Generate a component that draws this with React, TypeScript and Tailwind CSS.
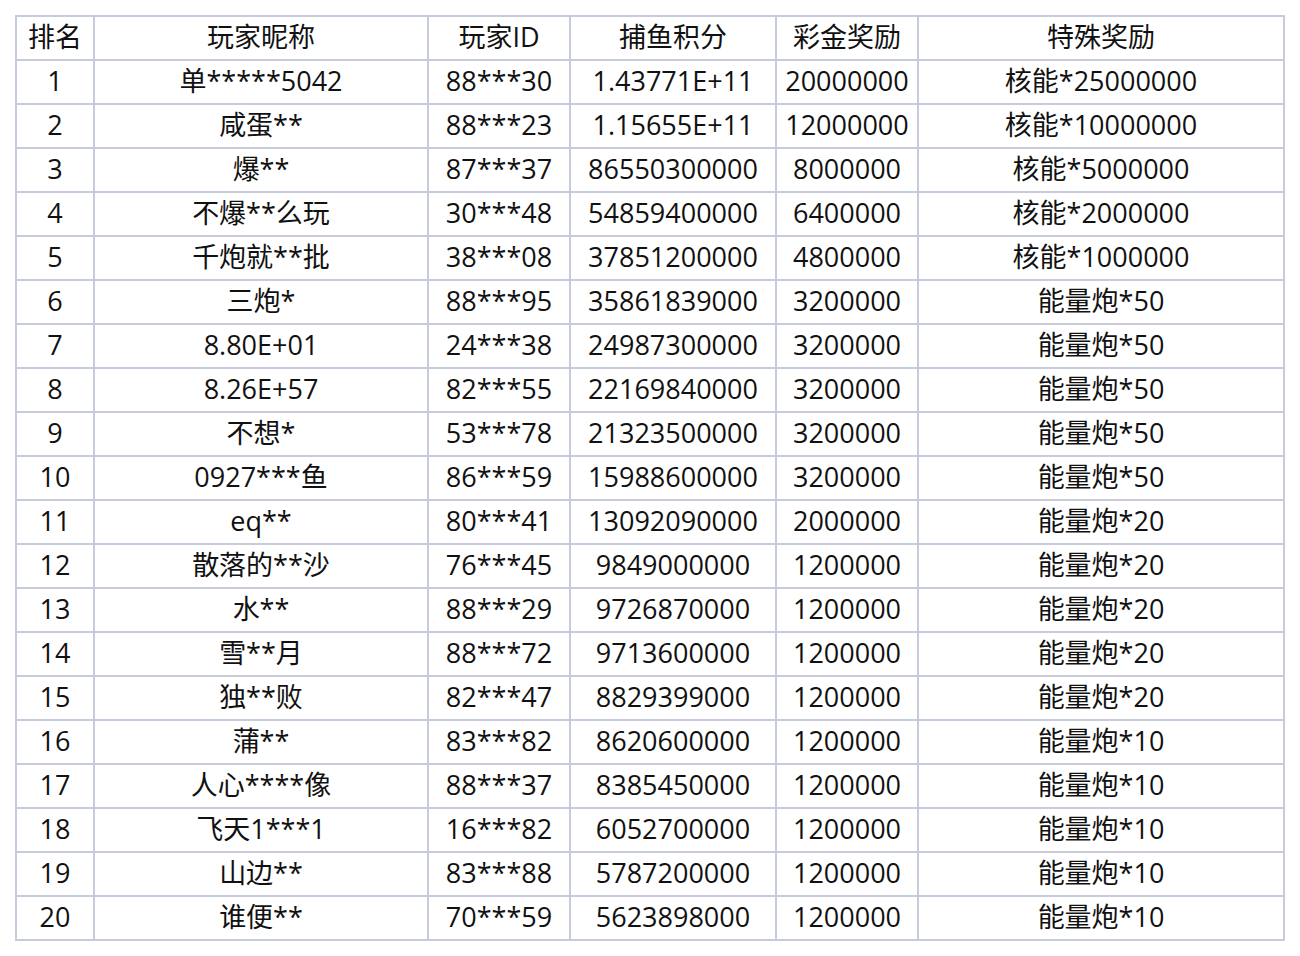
const headers = ["排名", "玩家昵称", "玩家ID", "捕鱼积分", "彩金奖励", "特殊奖励"];

const rows: [string, string, string, string, string][] = [
  ["单*****5042", "88***30", "1.43771E+11", "20000000", "核能*25000000"],
  ["咸蛋**", "88***23", "1.15655E+11", "12000000", "核能*10000000"],
  ["爆**", "87***37", "86550300000", "8000000", "核能*5000000"],
  ["不爆**么玩", "30***48", "54859400000", "6400000", "核能*2000000"],
  ["千炮就**批", "38***08", "37851200000", "4800000", "核能*1000000"],
  ["三炮*", "88***95", "35861839000", "3200000", "能量炮*50"],
  ["8.80E+01", "24***38", "24987300000", "3200000", "能量炮*50"],
  ["8.26E+57", "82***55", "22169840000", "3200000", "能量炮*50"],
  ["不想*", "53***78", "21323500000", "3200000", "能量炮*50"],
  ["0927***鱼", "86***59", "15988600000", "3200000", "能量炮*50"],
  ["eq**", "80***41", "13092090000", "2000000", "能量炮*20"],
  ["散落的**沙", "76***45", "9849000000", "1200000", "能量炮*20"],
  ["水**", "88***29", "9726870000", "1200000", "能量炮*20"],
  ["雪**月", "88***72", "9713600000", "1200000", "能量炮*20"],
  ["独**败", "82***47", "8829399000", "1200000", "能量炮*20"],
  ["蒲**", "83***82", "8620600000", "1200000", "能量炮*10"],
  ["人心****像", "88***37", "8385450000", "1200000", "能量炮*10"],
  ["飞天1***1", "16***82", "6052700000", "1200000", "能量炮*10"],
  ["山边**", "83***88", "5787200000", "1200000", "能量炮*10"],
  ["谁便**", "70***59", "5623898000", "1200000", "能量炮*10"],
];

const cell = "border-2 border-[#c6cbdd] p-0 pb-[4px] text-center align-middle whitespace-nowrap";

export default function App() {
  return (
    <div className="min-h-[956px] w-[1300px] bg-white pl-[15px] pt-[15px] font-['Open_Sans','Noto_Sans_CJK_SC',sans-serif] text-[27px] leading-none text-[#111]">
      <table className="w-[1268px] table-fixed border-collapse">
        <colgroup>
          <col className="w-[78px]" />
          <col className="w-[334px]" />
          <col className="w-[142px]" />
          <col className="w-[206px]" />
          <col className="w-[142px]" />
          <col className="w-[366px]" />
        </colgroup>
        <thead>
          <tr className="h-[44px]">
            {headers.map((h) => (
              <th key={h} className={cell + " font-normal"}>
                {h}
              </th>
            ))}
          </tr>
        </thead>
        <tbody>
          {rows.map((r, i) => (
            <tr key={i} className="h-[44px]">
              <td className={cell}>{i + 1}</td>
              {r.map((v, j) => (
                <td key={j} className={cell}>
                  {v}
                </td>
              ))}
            </tr>
          ))}
        </tbody>
      </table>
    </div>
  );
}
